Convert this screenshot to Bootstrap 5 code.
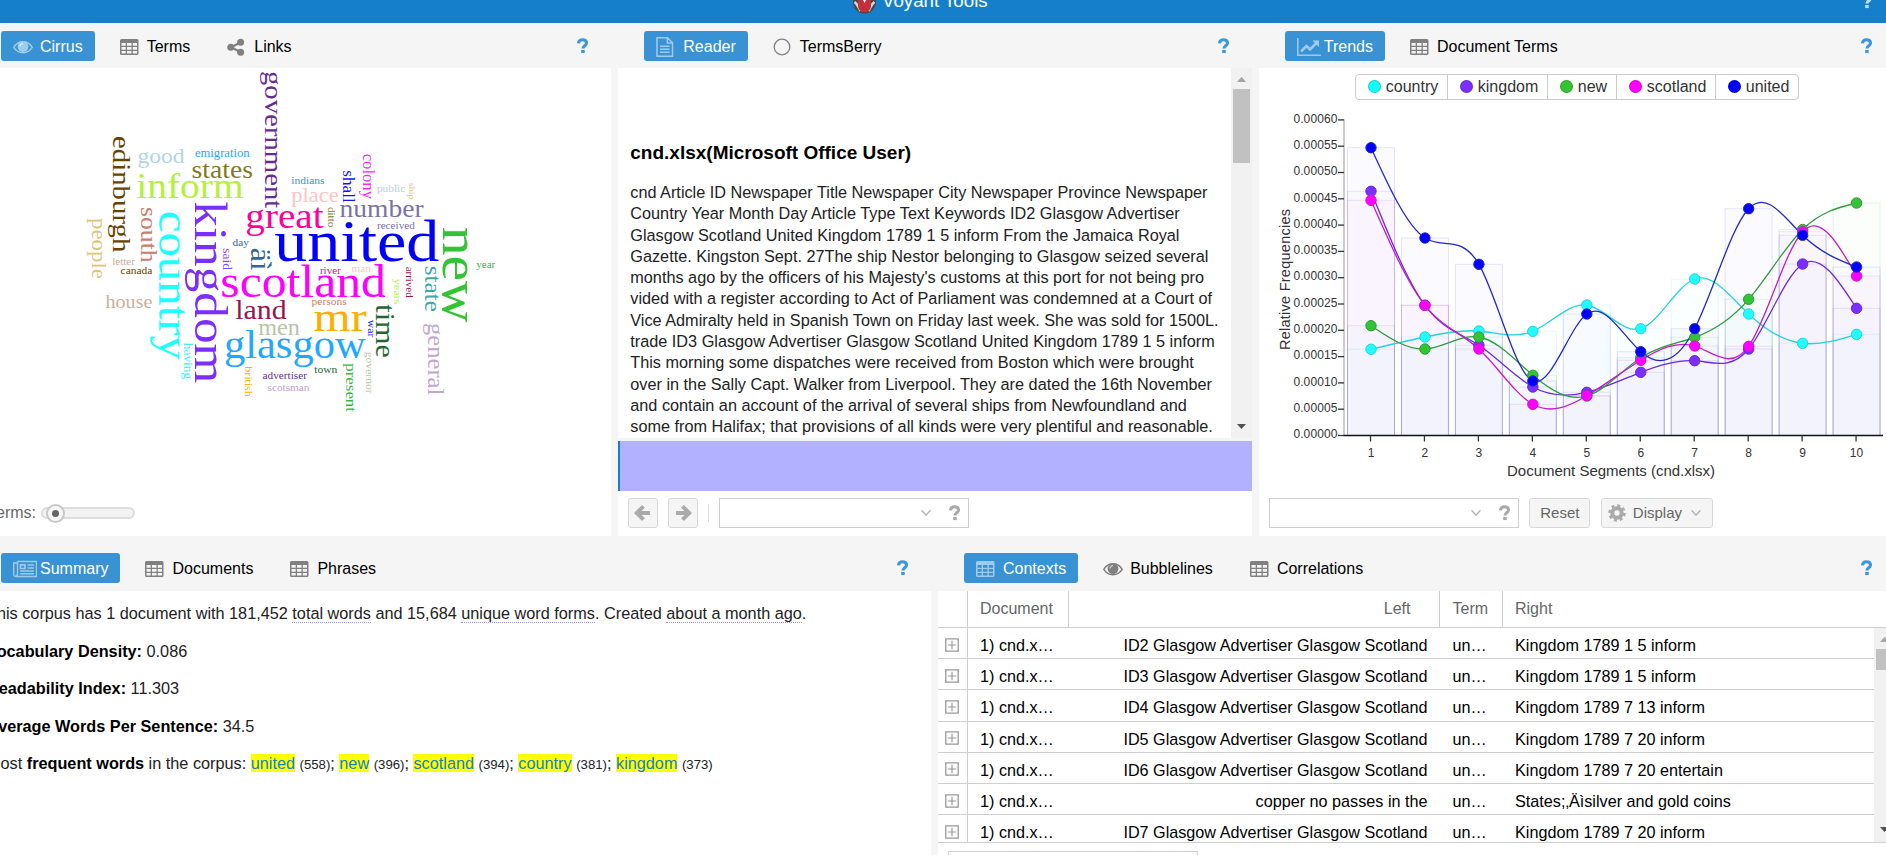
<!DOCTYPE html>
<html lang="en">
<head>
<meta charset="utf-8">
<title>Voyant Tools</title>
<link href="https://cdn.jsdelivr.net/npm/bootstrap@5.3.0/dist/css/bootstrap.min.css" rel="stylesheet">
<style>
  body { width:1886px; height:855px; overflow:hidden; background:#f5f5f5; color:#000; font:16px/20px "Liberation Sans", Arial, sans-serif; }
  svg { display:block; flex:none; }
  .topbar { height:23px; background:#157fcc; color:#fff; overflow:hidden; font-size:18.7px; }
  .topbar .brand { margin-left:853px; margin-top:-9px; }
  .topbar .title-txt { margin-left:6px; }
  .topbar .help { width:11px; height:16px; margin:-7px 14px 0 0; opacity:.75; }
  .upper { height:513px; gap:6.5px; }
  .lower { height:319px; gap:7px; }
  .w-cirrus { width:611.3px; } .w-reader { width:634.5px; } .w-summary { width:931px; }
  .tabs { height:45px; padding-top:8px; gap:13px; flex:none; }
  .lower .tabs { height:55px; padding-top:17px; }
  .tab-item { height:30px; padding:1px 12px 0; display:flex; align-items:center; border-radius:3px; white-space:nowrap; }
  .tab-item svg { margin-right:7px; width:20px; height:20px; color:#808080; }
  .tab-item.on { background:#3892d4; color:#fff; }
  .tab-item.on svg { color:#9fcbec; }
  .hlp { width:11px; height:16px; color:#3f97d8; margin-top:7px; }
  .tool { height:30px; background:#f5f5f5; border:1px solid #d8d8d8; border-radius:3px; color:#666; }
  .combo { height:30px; width:250px; border:1px solid #cfcfcf; background:#fff; padding-right:8px; color:#aaa; flex:none; }
  .sbar { width:21px; background:#f1f1f1; flex:none; }
  .thumb { background:#c1c1c1; width:17px; }
  .read-text { padding:73px 0 0 12.5px; white-space:nowrap; overflow:hidden; height:370px; color:#222; }
  .read-text h1 { font-size:19px; line-height:24px; font-weight:700; margin:0 0 17px; color:#000; }
  .read-text p { font-size:16.25px; line-height:21.3px; margin:0; }
  .lens { height:50px; background:#b2b1ff; border-left:2px solid #157fcc; margin-top:3px; }
  .rbar { height:44px; }
  .sep { width:1px; height:18px; background:#e0e0e0; }
  .terms-lbl { color:#666; margin-left:-12px; width:53px; }
  .slide { width:94px; height:12px; border:2px solid #ddd; border-radius:6px; background:#f2f2f2; }
  .knob { width:19px; height:19px; border:2px solid #c9c9c9; border-radius:50%; background:#f7f7f7; margin:-5.5px 0 0 3px; display:flex; align-items:center; justify-content:center; }
  .knob::after { content:""; width:7px; height:7px; border-radius:50%; background:#666; }
  .summary-text { font-size:16.25px; color:#222; padding-top:12px; white-space:nowrap; overflow:hidden; }
  .summary-text p { margin:0 0 17.5px -13px; }
  .summary-text b { color:#000; }
  .summary-text u { text-decoration:none; border-bottom:1px dotted #9c9cf0; }
  .summary-text a { color:#157fcc; background:#ff0; text-decoration:none; }
  .summary-text small { font-size:13.2px; }
  .legend-box { border:1px solid #ccc; border-radius:4px; height:26px; width:444px; color:#333; margin:5.5px 0 0 96px; }
  .legend-box span { display:flex; align-items:center; padding-left:12px; gap:5px; border-right:1px solid #ccc; }
  .legend-box span:last-child { border:0; }
  .legend-box i { width:13px; height:13px; border-radius:50%; border:1px solid rgba(0,0,0,.18); }
  .g-head { height:37px; border-bottom:1px solid #cfcfcf; color:#666; line-height:35px; flex:none; }
  .g-head > div { border-right:1px solid #cfcfcf; }
  .g-head > div:last-child { border:0; }
  .g-row { height:31.2px; border-bottom:1px solid #cfcfcf; line-height:34px; white-space:nowrap; font-size:16.2px; }
  .c0 { width:29.5px; border-right:1px solid #cfcfcf; display:flex; align-items:center; justify-content:center; }
  .g-row .c0 { padding-top:3px; }
  .c1 { width:101px; padding-left:12.5px; } .c2 { width:371px; padding-right:12px; text-align:right; }
  .g-head .c2 { padding-right:28px; }
  .c3 { width:63px; padding-left:13px; } .c4 { padding-left:12.5px; }
  .g-body { height:215px; overflow:hidden; border-bottom:1px solid #cfcfcf; flex:none; }
  .cloudfont { font-family:"Liberation Serif", serif; }
</style>
</head>
<body>
<svg width="0" height="0" class="position-absolute">
  <symbol id="eye" viewBox="0 0 20 20"><path d="M.8 10.3C5.200 2.800 14.800 2.800 19.200 10.300C14.800 17.400 5.200 17.400 .8 10.300Z" fill="none" stroke="currentColor" stroke-width="1.500"/><circle cx="10" cy="9.600" r="5.400" fill="currentColor"/><path d="M7 9.500a3.200 3.200 0 0 1 3-3" fill="none" stroke="#fff" stroke-opacity=".65" stroke-width="1.200"/></symbol>
  <symbol id="tbl" viewBox="0 0 20 20"><path fill="currentColor" fill-rule="evenodd" d="M1.500 2h15.500a1.500 1.500 0 0 1 1.500 1.500v13a1.500 1.500 0 0 1-1.500 1.500h-15.500a1.500 1.500 0 0 1-1.500-1.500v-13a1.500 1.500 0 0 1 1.500-1.500zM1.500 6v2.700h4.200v-2.700zM7 6v2.700h4.500v-2.700zM12.800 6v2.700h4.200v-2.700zM1.500 10v2.700h4.200v-2.700zM7 10v2.700h4.500v-2.700zM12.800 10v2.700h4.200v-2.700zM1.500 14v2.600h4.200v-2.600zM7 14v2.600h4.500v-2.600zM12.800 14v2.600h4.200v-2.600z"/></symbol>
  <symbol id="share" viewBox="0 0 20 20"><path d="M13.500 5.500L4 10.300l9.500 4.600" fill="none" stroke="currentColor" stroke-width="2.200"/><circle cx="13.600" cy="5.200" r="3.500" fill="currentColor"/><circle cx="3.800" cy="10.200" r="3.500" fill="currentColor"/><circle cx="13.600" cy="15.200" r="3.500" fill="currentColor"/></symbol>
  <symbol id="file" viewBox="0 0 20 20"><path d="M1 .8h10.500l5 5v13.500h-15.500zM11.300 1v5h5M4 9.300h9.500M4 12.300h9.500M4 15.300h9.500" fill="none" stroke="currentColor" stroke-width="1.500"/></symbol>
  <symbol id="ring" viewBox="0 0 20 20"><circle cx="9" cy="10" r="7.800" fill="none" stroke="currentColor" stroke-width="1.300"/></symbol>
  <symbol id="trend" viewBox="0 0 24 20"><path d="M.8 1v17.200h23" fill="none" stroke="currentColor" stroke-width="1.500"/><path d="M4 14.500l5.500-5.500 3.500 3.500 6.500-6.500" fill="none" stroke="currentColor" stroke-width="2.500"/><path d="M15.500 3.500h6.500v6.500z" fill="currentColor"/></symbol>
  <symbol id="news" viewBox="0 0 24 20"><path d="M4.500 2.500h19v15h-21a2 2 0 0 1-1.800-2v-11.500h3.600M4.500 2.500v12.500a2.200 2.200 0 0 1-2.200 2.300M14.500 6h6.500M14.500 9h6.500M7 12h14M7 14.700h14" fill="none" stroke="currentColor" stroke-width="1.400"/><path d="M7.500 5.800h4.500v3.700h-4.500z" fill="none" stroke="currentColor" stroke-width="1.700"/></symbol>
  <symbol id="q" viewBox="0 0 11 16"><path d="M1.500 5.300C1.700 2.800 3.200 1.700 5.400 1.700c2.300 0 4.100 1.200 4.100 3.300 0 2.700-3.500 2.800-3.500 5.500" fill="none" stroke="currentColor" stroke-width="3.100"/><path d="M4.200 11.900h3.500v3.200h-3.500z" fill="currentColor"/></symbol>
  <symbol id="chev" viewBox="0 0 12 8"><path d="M1.500 1.200l4.500 5 4.500-5" fill="none" stroke="#b5b5b5" stroke-width="1.500"/></symbol>
  <symbol id="arr" viewBox="0 0 18 18"><path d="M16 9H4M9.500 2.300L2.800 9l6.700 6.700" fill="none" stroke="#aaa" stroke-width="4"/></symbol>
  <symbol id="gear" viewBox="0 0 18 18"><circle cx="9" cy="9" r="4.700" fill="none" stroke="#aaa" stroke-width="4"/><circle cx="9" cy="9" r="7.300" fill="none" stroke="#aaa" stroke-width="3" stroke-dasharray="2.900 2.833"/></symbol>
  <symbol id="plus" viewBox="0 0 14 14"><path d="M.8.8h12.400v12.400h-12.400z" fill="none" stroke="#999" stroke-width="1.300"/><path d="M7 2.800v8.400M2.800 7h8.400" stroke="#999" stroke-width="1.200"/></symbol>
</svg>

<header class="topbar d-flex">
  <div class="brand d-flex">
    <svg width="23" height="26" viewBox="0 0 23 26"><circle cx="11.500" cy="11" r="11.500" fill="#4a4a4a"/><path d="M1.500 11c3 2 4 5 6 9M21.500 11c-3 2-4 5-6 9" stroke="#d8d8d8" stroke-width="2.500" fill="none"/><path d="M5 8h13v6.500c0 4-3 7-6.500 7s-6.500-3-6.500-7z" fill="#c3303c"/><path d="M9.500 8h4l-2 4z" fill="#fff"/></svg>
    <span class="title-txt">Voyant Tools</span>
  </div>
  <svg class="help ms-auto"><use href="#q"/></svg>
</header>

<main>
<div class="upper d-flex">
  <section class="w-cirrus d-flex flex-column flex-shrink-0">
    <div class="tabs d-flex" style="margin-left:1px;padding-right:23px">
      <div class="tab-item on"><svg><use href="#eye"/></svg>Cirrus</div>
      <div class="tab-item"><svg><use href="#tbl"/></svg>Terms</div>
      <div class="tab-item"><svg><use href="#share"/></svg>Links</div>
      <svg class="hlp ms-auto"><use href="#q"/></svg>
    </div>
    <div class="bg-white flex-grow-1">
      <svg id="cloud" class="cloudfont" width="611" height="423" viewBox="0 68 611 423"></svg>
      <div class="rbar d-flex align-items-center">
        <span class="terms-lbl">Terms:</span>
        <div class="slide"><div class="knob"></div></div>
      </div>
    </div>
  </section>

  <section class="w-reader d-flex flex-column flex-shrink-0">
    <div class="tabs d-flex" style="padding-left:26.500px;padding-right:23.500px">
      <div class="tab-item on"><svg><use href="#file"/></svg>Reader</div>
      <div class="tab-item"><svg><use href="#ring"/></svg>TermsBerry</div>
      <svg class="hlp ms-auto"><use href="#q"/></svg>
    </div>
    <div class="bg-white d-flex">
      <div class="read-text flex-grow-1">
        <h1>cnd.xlsx(Microsoft Office User)</h1>
        <p>cnd Article ID Newspaper Title Newspaper City Newspaper Province Newspaper<br>Country Year Month Day Article Type Text Keywords ID2 Glasgow Advertiser<br>Glasgow Scotland United Kingdom 1789 1 5 inform From the Jamaica Royal<br>Gazette. Kingston Sept. 27The ship Nestor belonging to Glasgow seized several<br>months ago by the officers of his Majesty's customs at this port for not being pro<br>vided with a register according to Act of Parliament was condemned at a Court of<br>Vice Admiralty held in Spanish Town on Friday last week. She was sold for 1500L.<br>trade ID3 Glasgow Advertiser Glasgow Scotland United Kingdom 1789 1 5 inform<br>This morning some dispatches were received from Boston which were brought<br>over in the Sally Capt. Walker from Liverpool. They are dated the 16th November<br>and contain an account of the arrival of several ships from Newfoundland and<br>some from Halifax; that provisions of all kinds were very plentiful and reasonable.</p>
      </div>
      <div class="sbar d-flex flex-column align-items-center">
        <svg width="9" height="5" style="margin:9px 0 7px"><path d="M0 5h9L4.500 0z" fill="#a3a3a3"/></svg>
        <div class="thumb" style="height:74px"></div>
        <svg class="mt-auto" width="9" height="5" style="margin-bottom:9px"><path d="M0 0h9L4.500 5z" fill="#505050"/></svg>
      </div>
    </div>
    <div class="lens"></div>
    <div class="bg-white flex-grow-1"><div class="rbar d-flex align-items-center" style="padding-left:10px">
      <div class="tool d-flex align-items-center justify-content-center" style="width:30px"><svg width="18" height="18"><use href="#arr"/></svg></div>
      <div class="tool d-flex align-items-center justify-content-center" style="width:30px;margin-left:10px"><svg width="18" height="18" style="transform:scaleX(-1)"><use href="#arr"/></svg></div>
      <div class="sep" style="margin:0 10px"></div>
      <div class="combo d-flex align-items-center justify-content-end"><svg width="12" height="8" style="margin-right:17px"><use href="#chev"/></svg><svg width="11" height="16"><use href="#q"/></svg></div>
    </div></div>
  </section>

  <section class="flex-grow-1 d-flex flex-column" style="min-width:0">
    <div class="tabs d-flex" style="padding-left:26px;padding-right:14px">
      <div class="tab-item on"><svg style="width:24px;margin-right:3px"><use href="#trend"/></svg>Trends</div>
      <div class="tab-item"><svg><use href="#tbl"/></svg>Document Terms</div>
      <svg class="hlp ms-auto"><use href="#q"/></svg>
    </div>
    <div class="bg-white flex-grow-1">
      <div style="height:423px" class="overflow-hidden">
        <div class="legend-box d-flex">
          <span style="width:92px"><i style="background:#1ff"></i>country</span>
          <span style="width:100px"><i style="background:#7b2fff"></i>kingdom</span>
          <span style="width:69px"><i style="background:#33c433"></i>new</span>
          <span style="width:99px"><i style="background:#f0f"></i>scotland</span>
          <span><i style="background:#00f"></i>united</span>
        </div>
        <svg id="chart" width="626" height="391" viewBox="1259 99 626 391" fill="#333"></svg>
      </div>
      <div class="rbar d-flex align-items-center" style="padding-left:10px;gap:10.500px">
        <div class="combo d-flex align-items-center justify-content-end"><svg width="12" height="8" style="margin-right:17px"><use href="#chev"/></svg><svg width="11" height="16"><use href="#q"/></svg></div>
        <div class="tool d-flex align-items-center justify-content-center" style="width:61px;font-size:15px">Reset</div>
        <div class="tool d-flex align-items-center" style="width:112px;padding:0 6px;font-size:15px"><svg width="18" height="18" style="margin-right:7px"><use href="#gear"/></svg>Display<svg class="ms-auto me-1" width="12" height="8"><use href="#chev"/></svg></div>
      </div>
    </div>
  </section>
</div>

<div class="lower d-flex">
  <section class="w-summary d-flex flex-column flex-shrink-0">
    <div class="tabs d-flex" style="margin-left:1px;padding-right:23px">
      <div class="tab-item on"><svg style="width:24px;margin-right:3px"><use href="#news"/></svg>Summary</div>
      <div class="tab-item"><svg><use href="#tbl"/></svg>Documents</div>
      <div class="tab-item"><svg><use href="#tbl"/></svg>Phrases</div>
      <svg class="hlp ms-auto"><use href="#q"/></svg>
    </div>
    <div class="bg-white flex-grow-1 summary-text">
      <p>This corpus has 1 document with 181,452 <u>total words</u> and 15,684 <u>unique word forms</u>. Created <u>about a month ago</u>.</p>
      <p><b>Vocabulary Density:</b> 0.086</p>
      <p><b>Readability Index:</b> 11.303</p>
      <p><b>Average Words Per Sentence:</b> 34.5</p>
      <p>Most <b>frequent words</b> in the corpus: <a href="#">united</a> <small>(558)</small>; <a href="#">new</a> <small>(396)</small>; <a href="#">scotland</a> <small>(394)</small>; <a href="#">country</a> <small>(381)</small>; <a href="#">kingdom</a> <small>(373)</small></p>
    </div>
  </section>

  <section class="flex-grow-1 d-flex flex-column bg-white overflow-hidden">
    <div class="tabs d-flex" style="padding-left:26px;padding-right:14px;background:#f5f5f5">
      <div class="tab-item on"><svg><use href="#tbl"/></svg>Contexts</div>
      <div class="tab-item"><svg><use href="#eye"/></svg>Bubblelines</div>
      <div class="tab-item"><svg><use href="#tbl"/></svg>Correlations</div>
      <svg class="hlp ms-auto"><use href="#q"/></svg>
    </div>
    <div class="g-head d-flex"><div class="c0"></div><div class="c1">Document</div><div class="c2">Left</div><div class="c3">Term</div><div class="c4">Right</div></div>
    <div class="g-body d-flex">
      <div class="flex-grow-1" id="rows"></div>
      <div class="d-flex flex-column" style="width:12px;background:#f1f1f1;padding-left:2px">
        <svg width="10" height="5" style="margin:9px 0 7px 4px"><path d="M0 5h9L4.500 0z" fill="#a3a3a3"/></svg>
        <div style="height:21px;background:#c1c1c1"></div>
        <svg class="mt-auto" width="10" height="5" style="margin:0 0 10px 4px"><path d="M0 0h9L4.500 5z" fill="#505050"/></svg>
      </div>
    </div>
    <div class="combo" style="margin:8px 0 0 10px"></div>
  </section>
</div>
</main>

<script>
// Contexts rows
const adv = n => 'ID' + n + ' Glasgow Advertiser Glasgow Scotland';
const rows = [[adv(2),'Kingdom 1789 1 5 inform'],[adv(3),'Kingdom 1789 1 5 inform'],[adv(4),'Kingdom 1789 7 13 inform'],[adv(5),'Kingdom 1789 7 20 inform'],[adv(6),'Kingdom 1789 7 20 entertain'],['copper no passes in the','States;‚Äìsilver and gold coins'],[adv(7),'Kingdom 1789 7 20 inform']];
document.getElementById('rows').innerHTML = rows.map(r =>
  `<div class="g-row d-flex"><div class="c0"><svg width="14" height="14"><use href="#plus"/></svg></div><div class="c1">1) cnd.x…</div><div class="c2">${r[0]}</div><div class="c3">un…</div><div class="c4">${r[1]}</div></div>`).join('');

// Word cloud: [word, colour, start, end, baseline, rotated]
const em = {a:.5,b:.553,c:.444,d:.611,e:.479,f:.333,g:.556,h:.582,i:.291,j:.234,k:.556,l:.291,m:.883,n:.582,o:.546,p:.601,q:.56,r:.395,s:.424,t:.326,u:.603,v:.565,w:.834,x:.516,y:.556,z:.5,'ä':.5,'ì':.291};
const words = [
 ['good','#b3d4e8',138,185,162.7],['emigration','#1fa8ff',195.3,250,157],['states','#807a1f',192,253.3,177.7],['inform','#b5f03c',136.7,244,197.7],
 ['great','#ff0099',245.7,324,228.3],['day','#336699',233,249.3,246],['united','#0000ff',274.7,439.7,261],['scotland','#ff00ff',220.7,386.3,297],
 ['land','#99144d',235.7,287,318.7],['men','#b8c4a8',258.7,300.3,335.3],['glasgow','#1fa8ff',224.3,366,357.7],['advertiser','#662d91',263,307.3,379],
 ['scotsman','#c0a0cc',268,309.7,390.7],['letter','#c4b09c',112.7,135.3,264.7],['canada','#664400',121,152.7,273.7],['house','#c9b09c',106,152.7,307.7],
 ['indians','#33a0a0',291.7,325,183.7],['place','#ffc4c4',291.7,339.3,201.7],['public','#b3cfe0',377.3,405.7,192],['number','#7a72a8',340,424,216.7],
 ['received','#7a72a8',377.3,415.3,228.7],['river','#cc1480',320.3,341.3,274],['man','#ffc4c4',352,371.3,271.7],['persons','#c88070',312,347,305],
 ['mr','#ffae00',314,367,330.7],['town','#1f6633',314.7,337.7,373],['year','#33b840',476.7,495.7,268],
 ['government','#662d91',71,208.3,266,1],['edinburgh','#664400',136,252.3,113.7,1],['south','#c88070',207,262.7,141.7,1],['people','#e0c47a',218,279,93,1],
 ['country','#1fffff',210.7,360,160,1],['kingdom','#7b2fff',201.3,383.3,196,1],['said','#8a45ff',248.3,270,223.3,1],['äì','#336699',247.7,270.7,251.7,1],
 ['having','#40f0f0',342.7,379.3,184.7,1],['british','#ffae00',366.3,396.7,246,1],['colony','#ff1fff',153.7,199,363.7,1],['shall','#1414ee',170.3,202.7,343.3,1],
 ['ship','#e0c47a',182.7,199.7,410,1],['ditto','#807a1f',207,227.3,329,1],['new','#33c433',226.7,322.7,443.7,1],['state','#40a8a0',265.7,312,425.7,1],
 ['arrived','#99144d',266.7,297.7,407,1],['years','#b5f060',278.7,304.3,394.7,1],['time','#1f6633',304.3,358,376.7,1],['war','#1414ee',319.7,337.3,368.3,1],
 ['general','#c0a8cc',323,395.3,428.7,1],['governor','#b8c4a8',351.7,393.7,367,1],['present','#33b840',363.3,412,347,1]];
document.getElementById('cloud').innerHTML = words.map(([w,c,a,b,y,rot]) => {
  const L = b - a, fs = L / [...w].reduce((s,k) => s + em[k], 0) * 1.03;
  return `<text fill="${c}" font-size="${fs.toFixed(2)}" textLength="${L.toFixed(1)}" lengthAdjust="spacingAndGlyphs" transform="${rot ? `translate(${y-.8} ${a}) rotate(90)` : `translate(${a-.4} ${y})`}">${w}</text>`;
}).join('');

// Trends chart
const X = i => 1371 + i * 53.95, base = 434.5;
const series = [
 ['#1fffff','#22d3dd',[348.3,336,330,330.3,304,327.7,278,313,342.3,333.3]],
 ['#7b2fff','#6a28e0',[190.3,304.3,344.3,386,391.3,371.3,359.7,348,263,307.3]],
 ['#33c433','#2e9a3c',[324.7,348,336,374.3,395,356.7,336.3,298.3,228.5,202]],
 ['#ff00ff','#c41cc4',[199.3,304.3,348,403.3,394.7,359.3,345,345.3,230.7,275]],
 ['#0000ff','#2626cc',[146.7,237,263.3,380,313,350.7,327.7,207.7,234.3,266]]];
function spline(y) {               // natural cubic spline as Béziers
  const n = y.length, c = [], d = [], m = [];
  c[0] = .5; d[0] = 3 * (y[1] - y[0]) / 2;
  for (let i = 1; i < n; i++) {
    const last = i === n - 1, bb = last ? 2 : 4, r = 3 * ((last ? y[i] : y[i+1]) - y[i-1]), k = bb - c[i-1];
    c[i] = 1 / k; d[i] = (r - d[i-1]) / k;
  }
  m[n-1] = d[n-1];
  for (let i = n - 2; i >= 0; i--) m[i] = d[i] - c[i] * m[i+1];
  let p = `M${X(0)} ${y[0]}`;
  for (let i = 0; i < n - 1; i++) p += `C${X(i+1/3)} ${y[i]+m[i]/3} ${X(i+2/3)} ${y[i+1]-m[i+1]/3} ${X(i+1)} ${y[i+1]}`;
  return p;
}
let s = '';
for (const [f,l,y] of series) y.forEach((v,i) => s += `<rect x="${X(i)-23.5}" y="${v}" width="47" height="${base-v}" fill="${f}" fill-opacity=".014" stroke="${l}" stroke-opacity=".12"/>`);
s += `<path d="M1344 118.500V434.500" stroke="#999" fill="none"/><path d="M1343.500 434.500H1883" stroke="#111" stroke-width="1.500" fill="none"/>`;
for (let k = 0; k <= 12; k++) {
  const y = base - k * 26.3;
  s += `<path d="M1338 ${y}h6" stroke="#333" stroke-width="1.300"/><text x="1293.400" y="${y+2.7}" font-size="12" textLength="44">${'0.000' + String(k*5).padStart(2,'0')}</text>`;
}
for (let i = 0; i < 10; i++) s += `<path d="M${X(i)-.5} 434.500v6" stroke="#333" stroke-width="1.300"/><text x="${X(i)}" y="456.300" font-size="12" text-anchor="middle">${i+1}</text>`;
s += `<text x="1507" y="474.700" font-size="15" textLength="208">Document Segments (cnd.xlsx)</text><text transform="translate(1289.500 349) rotate(-90)" font-size="14.500" textLength="141">Relative Frequencies</text>`;
for (const [f,l,y] of series) s += `<path d="${spline(y)}" fill="none" stroke="${l}" stroke-width="1.300"/>`;
for (const [f,l,y] of series) y.forEach((v,i) => s += `<circle cx="${X(i)}" cy="${v}" r="5.200" fill="${f}" stroke="${l}"/>`);
document.getElementById('chart').innerHTML = s;
</script>
<script src="https://cdn.jsdelivr.net/npm/bootstrap@5.3.0/dist/js/bootstrap.bundle.min.js"></script>
</body>
</html>
